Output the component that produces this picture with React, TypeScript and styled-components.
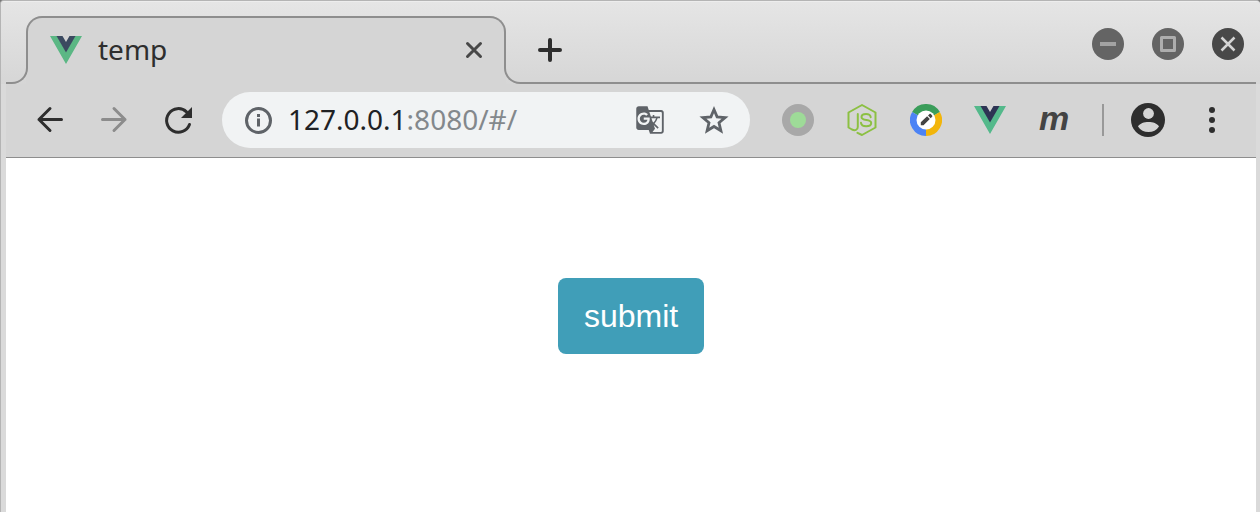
import React from "react";
import styled, { createGlobalStyle } from "styled-components";
import { MdGTranslate } from "react-icons/md";

const line = "#8e8e8e";
const chrome = "#d5d5d5";
const ink = "#2e2e2e";
const uiFont = '"Noto Sans", "Open Sans", sans-serif';

const GlobalStyle = createGlobalStyle`
  *, *::before, *::after { box-sizing: border-box; }
  body { margin: 0; background: #777; font-family: ${uiFont}; }
  svg { display: block; flex: none; }
`;

const Window = styled.div`
  display: flex;
  flex-direction: column;
  min-height: 100vh;
  overflow: hidden;
  background: ${chrome};
  border: 1px solid #b4b4b4;
  border-bottom: 0;
  border-right: 0;
  border-radius: 4px 4px 0 0;
`;

const TitleBar = styled.header`
  display: flex;
  align-items: flex-end;
  padding: 14px 4px 0 5px;
  background: linear-gradient(#e5e5e5, #d6d6d6);
  border-top: 1px solid #ededed;
`;

const TabLead = styled.div`
  width: 22px;
  height: 34px;
  margin-right: -2px;
  border: solid ${line};
  border-width: 0 2px 2px 0;
  border-bottom-right-radius: 16px;
  z-index: 1;
`;

const Tab = styled.div`
  position: relative;
  display: flex;
  align-items: center;
  flex: 0 1 480px;
  min-width: 200px;
  height: 68px;
  padding: 0 20px 0 24px;
  background: ${chrome};
  border-radius: 16px 16px 0 0;
  &::before {
    content: "";
    position: absolute;
    inset: 0 0 50% 0;
    border: 2px solid ${line};
    border-bottom: 0;
    border-radius: 16px 16px 0 0;
    pointer-events: none;
  }
`;

const TabTitle = styled.span`
  flex: 1;
  margin-left: 16px;
  padding-bottom: 2px;
  font-size: 28px;
  line-height: 36px;
  color: ${ink};
`;

const StripRest = styled.div`
  position: relative;
  display: flex;
  align-items: center;
  flex: 1;
  height: 68px;
  margin-left: -2px;
  padding: 0 12px 0 30px;
  &::before {
    content: "";
    position: absolute;
    inset: 50% 0 0 0;
    border: solid ${line};
    border-width: 0 0 2px 2px;
    border-bottom-left-radius: 16px;
    pointer-events: none;
  }
`;

const IconButton = styled.button<{ $color?: string }>`
  display: flex;
  align-items: center;
  justify-content: center;
  flex: none;
  width: 32px;
  height: 32px;
  padding: 0;
  border: 0;
  background: none;
  color: ${(p) => p.$color ?? ink};
  cursor: pointer;
`;

const TabClose = styled(IconButton)`
  width: 24px;
  height: 24px;
`;

const WindowControls = styled.div`
  display: flex;
  gap: 28px;
  margin-left: auto;
  padding-bottom: 12px;
`;

const ControlButton = styled(IconButton)<{ $fill: string }>`
  border-radius: 50%;
  background: ${(p) => p.$fill};
`;

const Body = styled.div`
  display: flex;
  flex-direction: column;
  flex: 1;
  padding: 0 4px 0 5px;
  background: #dadada;
`;

const Toolbar = styled.nav`
  display: flex;
  align-items: center;
  gap: 32px;
  height: 74px;
  padding: 0 28px 1px;
  background: ${chrome};
  border-bottom: 1px solid ${line};
`;

const AddressBar = styled.div`
  display: flex;
  align-items: center;
  flex: 1;
  min-width: 0;
  height: 56px;
  margin-left: -4px;
  padding: 0 20px;
  border-radius: 28px;
  background: #f1f3f4;
`;

const Url = styled.div`
  flex: 1;
  min-width: 0;
  margin-left: 14px;
  padding-bottom: 2px;
  overflow: hidden;
  white-space: nowrap;
  font-size: 28px;
  line-height: 38px;
  color: #83888c;
`;

const Host = styled.span`
  color: #202124;
`;

const AddressActions = styled.div`
  display: flex;
  gap: 32px;
`;

const Divider = styled.div`
  width: 2px;
  height: 32px;
  margin-right: -4px;
  background: #999;
`;

const Letter = styled.span`
  padding-bottom: 4px;
  font: italic bold 34px/32px "Liberation Sans", Arial, sans-serif;
`;

const Page = styled.main`
  display: flex;
  justify-content: center;
  align-items: flex-start;
  flex: 1;
  padding: 120px 16px 32px;
  background: #fff;
`;

const SubmitButton = styled.button`
  padding: 20px 26px;
  border: 0;
  border-radius: 8px;
  background: #409eb8;
  color: #fff;
  font: 32px/36px "Liberation Sans", Arial, sans-serif;
  cursor: pointer;
`;

const VueLogo = ({ green = "#5bb784", navy = "#3b4a60" }) => (
  <svg width="32" height="28" viewBox="0 0 32 28" aria-hidden="true">
    <path fill={green} d="M0 0h7l9 15.500L25 0h7L16 28z" />
    <path fill={navy} d="M6.500 0h6L16 6l3.500-6h6L16 16.500z" />
  </svg>
);

const stroke = {
  fill: "none",
  stroke: "currentColor",
  strokeLinecap: "round" as const,
  strokeLinejoin: "round" as const,
};

export default function App() {
  return (
    <>
      <GlobalStyle />
      <Window>
        <TitleBar>
          <TabLead />
          <Tab>
            <VueLogo />
            <TabTitle>temp</TabTitle>
            <TabClose aria-label="Close tab" $color="#484848">
              <svg width="24" height="24" viewBox="0 0 24 24" {...stroke} strokeWidth="3">
                <path d="M5.500 5.500l13 13M18.500 5.500l-13 13" />
              </svg>
            </TabClose>
          </Tab>
          <StripRest>
            <IconButton aria-label="New tab">
              <svg width="28" height="28" viewBox="0 0 28 28" {...stroke} strokeWidth="4">
                <path d="M14 4v20M4 14h20" />
              </svg>
            </IconButton>
            <WindowControls>
              <ControlButton aria-label="Minimize" $fill="#646464" $color="#a2a2a2">
                <svg width="32" height="32" viewBox="0 0 32 32" {...stroke} strokeLinecap="butt" strokeWidth="4">
                  <path d="M8 16h16" />
                </svg>
              </ControlButton>
              <ControlButton aria-label="Maximize" $fill="#646464" $color="#adadad">
                <svg width="32" height="32" viewBox="0 0 32 32" {...stroke} strokeWidth="3">
                  <path d="M9.500 9.500h13v13h-13z" />
                </svg>
              </ControlButton>
              <ControlButton aria-label="Close window" $fill="#484848" $color="#d4d4d4">
                <svg width="32" height="32" viewBox="0 0 32 32" {...stroke} strokeLinecap="butt" strokeWidth="2.500">
                  <path d="M9.500 9.500l13 13M22.500 9.500l-13 13" />
                </svg>
              </ControlButton>
            </WindowControls>
          </StripRest>
        </TitleBar>
        <Body>
          <Toolbar aria-label="Browser toolbar">
            <IconButton aria-label="Back">
              <svg width="32" height="32" viewBox="0 0 32 32" {...stroke} strokeWidth="3">
                <path d="M27.500 15.500H5M16 4.500l-11 11 11 11" />
              </svg>
            </IconButton>
            <IconButton aria-label="Forward" $color="#8c8c8c">
              <svg width="32" height="32" viewBox="0 0 32 32" {...stroke} strokeWidth="3">
                <path d="M4.500 15.500H27M16 4.500l11 11-11 11" />
              </svg>
            </IconButton>
            <IconButton aria-label="Reload">
              <svg width="32" height="32" viewBox="0 0 32 32" {...stroke} strokeWidth="3">
                <path d="M27.500 20.500A11.800 11.800 0 1 1 24.500 7.800" />
                <path d="M30 3v11H19z" fill="currentColor" stroke="none" />
              </svg>
            </IconButton>
            <AddressBar>
              <IconButton aria-label="Site information" $color="#5f6368">
                <svg width="32" height="32" viewBox="0 0 32 32" {...stroke} strokeWidth="3" strokeLinecap="butt">
                  <circle cx="16.500" cy="16.500" r="12" />
                  <path d="M16.500 14.500v8M16.500 10v3" />
                </svg>
              </IconButton>
              <Url>
                <Host>127.0.0.1</Host>:8080/#/
              </Url>
              <AddressActions>
                <IconButton aria-label="Translate" $color="#5f6368">
                  <MdGTranslate size={30} />
                </IconButton>
                <IconButton aria-label="Bookmark" $color="#5f6368">
                  <svg width="32" height="32" viewBox="0 0 32 32" {...stroke} strokeWidth="2.800" strokeLinejoin="miter">
                    <path d="M16 5.500l3.100 7.400 8 .7-6.100 5.200 1.900 7.900-6.900-4.200-6.900 4.200 1.900-7.900-6.100-5.200 8-.7z" />
                  </svg>
                </IconButton>
              </AddressActions>
            </AddressBar>
            <IconButton aria-label="Status extension">
              <svg width="32" height="32" viewBox="0 0 32 32">
                <circle cx="16" cy="16" r="16" fill="#a8a8a8" />
                <circle cx="16" cy="16" r="8" fill="#9edb98" />
              </svg>
            </IconButton>
            <IconButton aria-label="Node extension" $color="#8cc043">
              <svg width="32" height="32" viewBox="0 0 32 32" {...stroke} strokeWidth="2">
                <path d="M11.500 28.800l4.500 2.200 13.500-7.500v-15L16 1 2.500 8.500v15L6 25.500c3 1.500 5.800 .3 5.800-2.500V10" />
                <path d="M24.700 13.200c-.4-2.400-2-3.200-4.600-3.200-2.900 0-4.600 1-4.600 3 0 4.700 9.700 1.400 9.700 6 0 2.100-1.900 3.200-5 3.200-3.200 0-4.900-1-5.200-3.400" />
              </svg>
            </IconButton>
            <IconButton aria-label="Edit extension">
              <svg width="32" height="32" viewBox="0 0 32 32">
                <path fill="#3a9d5a" d="M16 16L2.140 8A16 16 0 0 1 29.860 8z" />
                <path fill="#f2b50a" d="M16 16L29.860 8A16 16 0 0 1 16 32z" />
                <path fill="#4c83f5" d="M16 16v16A16 16 0 0 1 2.140 8z" />
                <circle cx="16" cy="16" r="9.500" fill="#fff" />
                <path fill="#444" d="M10.800 21.300v-3l6.300-6 2.700 2.700-6.300 6.300zM18 11.500l1.500-1.400c.4-.4.900-.4 1.300 0l1.300 1.300c.4.400.4.900 0 1.300l-1.400 1.500z" />
              </svg>
            </IconButton>
            <IconButton aria-label="Vue extension">
              <VueLogo green="#54b98b" navy="#2d3454" />
            </IconButton>
            <IconButton aria-label="Markdown extension" $color="#444">
              <Letter>m</Letter>
            </IconButton>
            <Divider />
            <IconButton aria-label="Account">
              <svg width="34" height="34" viewBox="0 0 34 34" fill="currentColor">
                <circle cx="17" cy="17" r="17" />
                <circle cx="17.500" cy="10.500" r="5.400" fill={chrome} />
                <path d="M7 23.500c2-3.300 6-4.500 10.500-4.500S26 20.200 28 23.500c-2.500 3.800-6 5.500-10.500 5.500S9.500 27.300 7 23.500z" fill={chrome} />
              </svg>
            </IconButton>
            <IconButton aria-label="Menu">
              <svg width="32" height="32" viewBox="0 0 32 32" fill="currentColor">
                <circle cx="16" cy="6" r="3" />
                <circle cx="16" cy="16" r="3" />
                <circle cx="16" cy="26" r="3" />
              </svg>
            </IconButton>
          </Toolbar>
          <Page>
            <SubmitButton type="button">submit</SubmitButton>
          </Page>
        </Body>
      </Window>
    </>
  );
}
